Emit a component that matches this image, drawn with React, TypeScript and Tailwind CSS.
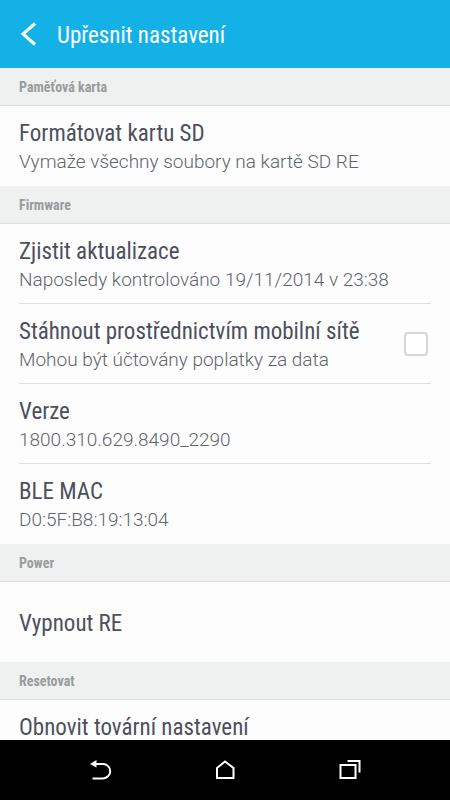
import type { ReactNode } from "react";

const condensed = "font-['Roboto_Condensed','Liberation_Sans_Narrow',Roboto,sans-serif]";
const regular = "font-[Roboto,'Liberation_Sans',sans-serif]";

function Section({ title, children }: { title: string; children: ReactNode }) {
  return (
    <section>
      <h2 className={`flex h-[38px] items-center border-b border-[#dcdedd] bg-[#eff1f0] px-[19px] pt-0.5 text-[14px] font-bold text-[#999b9c] ${condensed}`}>
        {title}
      </h2>
      <ul className="flex flex-col px-[19px]">{children}</ul>
    </section>
  );
}

function RowText({ title, detail }: { title: string; detail?: string }) {
  return (
    <span className="flex min-w-0 flex-1 flex-col whitespace-nowrap text-left">
      <span className={`text-[23px] leading-[32px] text-[#4c505c] ${condensed}`}>{title}</span>
      {detail && <span className={`text-[19px] leading-[24px] font-light text-[#60646c] ${regular}`}>{detail}</span>}
    </span>
  );
}

const rowClass = "h-20 border-b border-[#dedfe0] last:border-transparent";

function Row({ title, detail, centered = false }: { title: string; detail?: string; centered?: boolean }) {
  return (
    <li className={rowClass}>
      <button type="button" className={`flex h-full w-full ${centered ? "items-center pt-1" : "items-start pt-3"}`}>
        <RowText title={title} detail={detail} />
      </button>
    </li>
  );
}

function CheckRow({ title, detail }: { title: string; detail: string }) {
  return (
    <li className={rowClass}>
      <label className="flex h-full items-start pt-3 pr-[3px]">
        <RowText title={title} detail={detail} />
        <input
          type="checkbox"
          className="mt-4 size-6 shrink-0 appearance-none rounded-[4px] border-2 border-[#d6d6d6] bg-white checked:bg-[#14b1e7]"
        />
      </label>
    </li>
  );
}

export default function App() {
  return (
    <div className="flex h-screen flex-col overflow-hidden bg-[#fdfdfd]">
      <header className="flex h-[68px] shrink-0 items-center bg-[#14b1e7] pl-[19px] text-white">
        <button type="button" aria-label="Zpět" className="flex w-[38px]">
          <svg viewBox="0 0 20 26" className="h-[26px] w-5" fill="none" stroke="currentColor" strokeWidth="3">
            <path d="M16 2.500 4 13l12 10.500" />
          </svg>
        </button>
        <h1 className={`pt-1 text-[23px] leading-[30px] ${condensed}`}>Upřesnit nastavení</h1>
      </header>

      <main className="min-h-0 flex-1 overflow-hidden">
        <Section title="Paměťová karta">
          <Row title="Formátovat kartu SD" detail="Vymaže všechny soubory na kartě SD RE" />
        </Section>
        <Section title="Firmware">
          <Row title="Zjistit aktualizace" detail="Naposledy kontrolováno 19/11/2014 v 23:38" />
          <CheckRow title="Stáhnout prostřednictvím mobilní sítě" detail="Mohou být účtovány poplatky za data" />
          <Row title="Verze" detail="1800.310.629.8490_2290" />
          <Row title="BLE MAC" detail="D0:5F:B8:19:13:04" />
        </Section>
        <Section title="Power">
          <Row title="Vypnout RE" centered />
        </Section>
        <Section title="Resetovat">
          <Row title="Obnovit tovární nastavení" />
        </Section>
      </main>

      <nav className="flex h-[60px] shrink-0 items-center justify-center gap-[101px] bg-black text-white">
        <button type="button" aria-label="Zpět">
          <svg viewBox="0 0 24 24" className="size-6" fill="none" stroke="currentColor" strokeWidth="2">
            <path d="M6 6h9a7.200 7.200 0 0 1 0 14.400H4.500" />
            <path d="M2 6 8.500 2v7.500z" fill="currentColor" stroke="none" />
          </svg>
        </button>
        <button type="button" aria-label="Domů">
          <svg viewBox="0 0 24 24" className="size-6" fill="none" stroke="currentColor" strokeWidth="2">
            <path d="M4 10 12 3.500l8.500 6.500v10H4z" />
          </svg>
        </button>
        <button type="button" aria-label="Poslední aplikace">
          <svg viewBox="0 0 24 24" className="size-6" fill="none" stroke="currentColor" strokeWidth="2">
            <path d="M2.500 7h15v13h-15zM9.500 3h12v11.500" />
          </svg>
        </button>
      </nav>
    </div>
  );
}
